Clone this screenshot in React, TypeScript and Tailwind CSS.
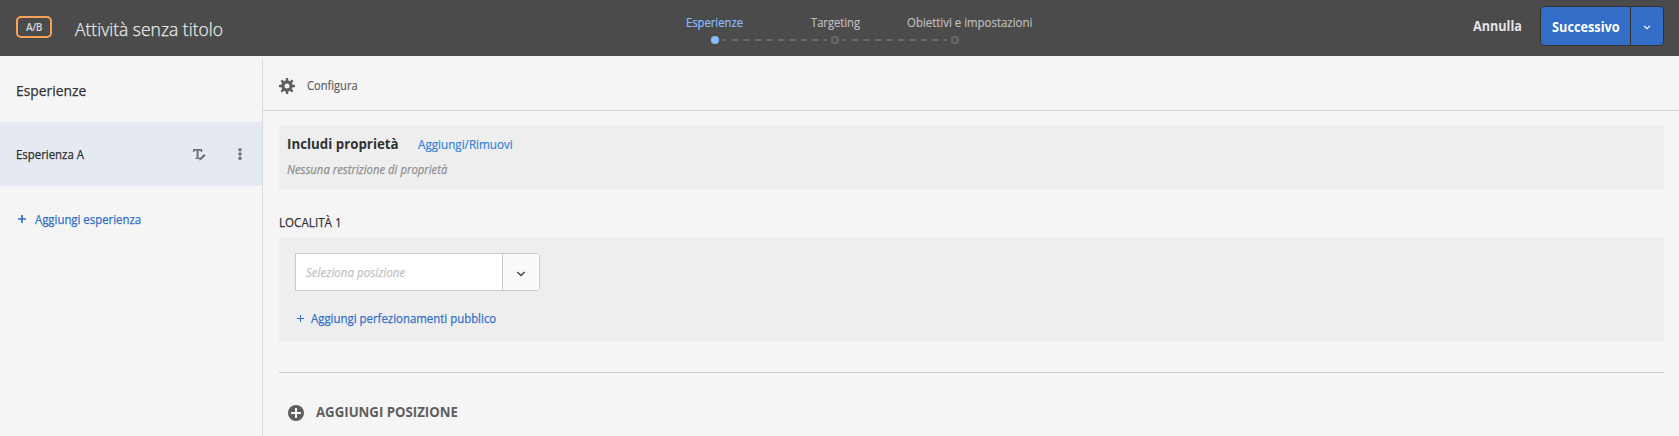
import React from 'react';
import clsx from 'clsx';

type TextProps = { children: React.ReactNode; box: string; text: string };

/* Single-line label set in a narrowed face: `box` sizes the slot, `text` styles the glyphs. */
function Label({ children, box, text }: TextProps) {
  return (
    <span className={clsx('block shrink-0 whitespace-nowrap', box)}>
      <span className={clsx('block w-max origin-left', text)}>{children}</span>
    </span>
  );
}

function Chevron({ className }: { className: string }) {
  return (
    <svg className={className} viewBox="0 0 10 6" fill="none" stroke="currentColor" strokeWidth="1.6">
      <path d="M1.300 1 5 4.500l3.700-3.500" />
    </svg>
  );
}

function Gear() {
  const teeth = [0, 45, 90, 135, 180, 225, 270, 315];
  return (
    <svg className="size-4 text-[#5e5e5e]" viewBox="0 0 16 16" fill="currentColor">
      {teeth.map((a) => (
        <rect key={a} x="6.8" y="0" width="2.4" height="4" rx="0.4" transform={`rotate(${a} 8 8)`} />
      ))}
      <circle cx="8" cy="8" r="4.1" fill="none" stroke="currentColor" strokeWidth="3.2" />
    </svg>
  );
}

function RenameIcon() {
  return (
    <svg className="mt-0.5 h-3 w-[13px] text-[#707070]" viewBox="0 0 13 12" fill="currentColor">
      <path d="M0 0h9.2v3H7.800V1.700H5.600v7.100h1.200V10H2.500V8.800h1.100V1.700H1.400V3H0z" />
      <path d="M11.100 4.900 12.700 6.400 8.300 10.700 6 11.400 6.700 9.200z" />
    </svg>
  );
}

function Steps() {
  return (
    <div className="flex w-[400px] shrink-0 flex-col">
      <div className="flex h-5 items-center">
        <Label box="w-[125px] pl-[26px]" text="scale-x-[0.864] text-[13px] leading-5 text-[#8abdff] [-webkit-text-stroke:0.2px]">
          Esperienze
        </Label>
        <Label box="w-[96px] pl-[26px]" text="scale-x-[0.86] text-[13px] leading-5 text-[#bdbdbd] [-webkit-text-stroke:0.2px]">
          Targeting
        </Label>
        <Label box="w-[152px] pl-[26px]" text="scale-x-[0.879] text-[13px] leading-5 text-[#bdbdbd] [-webkit-text-stroke:0.2px]">
          Obiettivi e impostazioni
        </Label>
      </div>
      <svg className="mt-[3px] ml-[50px] h-2.5 w-[260px]" viewBox="0 0 260 10" fill="none">
        <g stroke="#6a6a6a" strokeWidth="2">
          <path d="M13 5h3M22 5h6M33.500 5h6M45 5h6M56.500 5h6M68 5h6M79.500 5h6M91 5h6M102.500 5h6M114 5h3" />
          <path d="M133 5h3M142 5h6M153.500 5h6M165 5h6M176.500 5h6M188 5h6M199.500 5h6M211 5h6M222.500 5h6M234 5h3" />
          <circle cx="125" cy="5" r="3.200" />
          <circle cx="245" cy="5" r="3.200" />
        </g>
        <circle cx="5" cy="5" r="4.100" fill="#8abdff" />
      </svg>
    </div>
  );
}

function Header() {
  return (
    <header className="flex h-14 items-start bg-[#4b4b4b] pl-4">
      <div className="mt-4 flex h-[22px] w-9 shrink-0 items-center justify-center rounded-[5px] border-2 border-[#f8a357]">
        <span className="text-[10px] font-semibold leading-none tracking-[-0.4px] text-[#d8d8d8]">A/B</span>
      </div>
      <Label
        box="mt-4 ml-[23px] w-[585px]"
        text="scale-x-[0.921] text-[19px] font-light leading-[26px] text-[#ececec] [-webkit-text-stroke:0.25px]"
      >
        Attività senza titolo
      </Label>
      <div className="mt-3">
        <Steps />
      </div>
      <Label box="mt-4 ml-[413px] w-[67px]" text="scale-x-[0.9] text-[14px] font-bold leading-5 text-[#e4e4e4]">
        Annulla
      </Label>
      <div className="mt-1.5 flex h-10 w-[124px] shrink-0 rounded-[4px] border border-[#323232] bg-[#326ec8] text-white">
        <button className="flex w-[90px] items-center border-r border-[#323232] pt-px pl-[11px]">
          <Label box="w-[68px]" text="scale-x-[0.91] text-[14px] font-bold leading-5">Successivo</Label>
        </button>
        <button className="flex flex-1 items-center justify-center" aria-label="Altro">
          <Chevron className="mt-[3px] h-[5px] w-2" />
        </button>
      </div>
    </header>
  );
}

function Sidebar() {
  return (
    <aside className="flex w-[262px] shrink-0 flex-col">
      <h2 className="flex h-[66px] items-center pt-0.5 pl-4">
        <Label box="w-[70px]" text="scale-x-[0.925] text-[15px] leading-6 text-[#323232] [-webkit-text-stroke:0.25px]">
          Esperienze
        </Label>
      </h2>
      <div className="flex h-16 items-center bg-[#e5eaf2] pl-4">
        <Label box="w-[177px]" text="scale-x-[0.877] text-[13px] leading-5 text-[#2c2c2c] [-webkit-text-stroke:0.25px]">
          Esperienza A
        </Label>
        <RenameIcon />
        <svg className="ml-8 h-3 w-1 text-[#6e6e6e]" viewBox="0 0 4 12" fill="currentColor">
          <circle cx="2" cy="1.700" r="1.700" />
          <circle cx="2" cy="6" r="1.700" />
          <circle cx="2" cy="10.300" r="1.700" />
        </svg>
      </div>
      <button className="mt-[23px] flex items-center pl-[18px] text-[#326ec8]">
        <svg className="mr-[9px] size-2" viewBox="0 0 8 8" stroke="currentColor" strokeWidth="1.700">
          <path d="M4 0v8M0 4h8" />
        </svg>
        <Label box="w-[106px]" text="scale-x-[0.875] text-[13px] leading-5 [-webkit-text-stroke:0.25px]">
          Aggiungi esperienza
        </Label>
      </button>
    </aside>
  );
}

function Content() {
  return (
    <main className="mt-0.5 flex min-w-0 flex-1 flex-col border-l border-[#dcdcdc]">
      <div className="flex h-[53px] items-center border-b border-[#d3d3d3] pl-4">
        <div className="pt-[3px]">
          <Gear />
        </div>
        <Label box="ml-3 pt-0.5" text="scale-x-[0.855] text-[13px] leading-5 text-[#5e5e5e] [-webkit-text-stroke:0.2px]">
          Configura
        </Label>
      </div>
      <div className="flex flex-col pr-[15px] pl-4">
        <section className="mt-[15px] h-[63px] bg-[#eeeeee] pt-[7px] pl-2">
          <div className="flex items-start">
            <Label box="w-[131px]" text="scale-x-[0.887] text-[15px] font-bold leading-5 text-[#323232]">Includi proprietà</Label>
            <Label box="w-[95px] pt-px" text="scale-x-[0.898] text-[13px] leading-5 text-[#2f84d8] [-webkit-text-stroke:0.2px]">
              Aggiungi/Rimuovi
            </Label>
          </div>
          <Label box="mt-[5px]" text="scale-x-[0.87] text-[13px] italic leading-5 text-[#909090] [-webkit-text-stroke:0.25px]">
            Nessuna restrizione di proprietà
          </Label>
        </section>
        <Label box="mt-[23px]" text="scale-x-[0.895] text-[13px] leading-5 text-[#323232] [-webkit-text-stroke:0.25px]">
          LOCALITÀ 1
        </Label>
        <section className="mt-[5px] h-[105px] bg-[#eeeeee] pt-4 pl-4">
          <div className="flex h-[38px] w-[245px] overflow-hidden rounded-r-[4px] border border-[#cacaca] bg-white">
            <div className="flex w-[206px] items-center pl-2.5">
              <Label box="w-[99px]" text="scale-x-[0.89] text-[13px] italic leading-5 text-[#c3c3c3] [-webkit-text-stroke:0.25px]">
                Seleziona posizione
              </Label>
            </div>
            <button className="flex flex-1 items-center justify-center border-l border-[#cacaca] bg-[#fafafa] text-[#4b4b4b]" aria-label="Apri">
              <Chevron className="mt-1 h-[6px] w-2.5" />
            </button>
          </div>
          <button className="mt-[17px] flex items-center pl-[2px] text-[#326ec8]">
            <svg className="mr-[7px] size-[7px]" viewBox="0 0 7 7" stroke="currentColor" strokeWidth="1">
              <path d="M3.500 0v7M0 3.500h7" />
            </svg>
            <Label box="w-[185px]" text="scale-x-[0.878] text-[13px] leading-5 [-webkit-text-stroke:0.25px]">
              Aggiungi perfezionamenti pubblico
            </Label>
          </button>
        </section>
        <div className="mt-[30px] border-t border-[#cacaca]" />
        <button className="mt-[29px] flex items-center pl-[9px] text-[#5e5e5e]">
          <svg className="mt-[2px] mr-[12px] size-4" viewBox="0 0 16 16">
            <circle cx="8" cy="8" r="8" fill="currentColor" />
            <path d="M8 3v10M3 8h10" stroke="#f5f5f5" strokeWidth="2" />
          </svg>
          <Label box="w-[142px]" text="scale-x-[0.944] text-[14px] font-bold leading-5">AGGIUNGI POSIZIONE</Label>
        </button>
      </div>
    </main>
  );
}

export default function App() {
  return (
    <div className="flex h-[436px] w-full flex-col overflow-hidden bg-[#f5f5f5] font-['Open_Sans','Noto_Sans',sans-serif]">
      <Header />
      <div className="flex min-h-0 flex-1">
        <Sidebar />
        <Content />
      </div>
    </div>
  );
}
